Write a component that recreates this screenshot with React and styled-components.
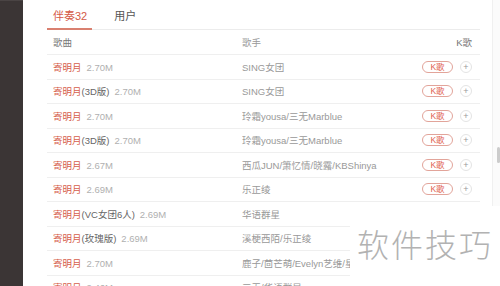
import React from "react";
import styled, { createGlobalStyle } from "styled-components";

const GlobalStyle = createGlobalStyle`
  html, body {
    margin: 0;
    padding: 0;
    background: #fff;
    overflow: hidden;
  }
  body {
    font-family: "Liberation Sans", "Noto Sans CJK SC", sans-serif;
  }
`;

const songs = [
  { name: "寄明月", tag: "", size: "2.70M", singer: "SING女团" },
  { name: "寄明月", tag: "(3D版)", size: "2.70M", singer: "SING女团" },
  { name: "寄明月", tag: "", size: "2.70M", singer: "玲霜yousa/三无Marblue" },
  { name: "寄明月", tag: "(3D版)", size: "2.70M", singer: "玲霜yousa/三无Marblue" },
  { name: "寄明月", tag: "", size: "2.67M", singer: "西瓜JUN/箫忆情/晓露/KBShinya" },
  { name: "寄明月", tag: "", size: "2.69M", singer: "乐正绫" },
  { name: "寄明月", tag: "(VC女团6人)", size: "2.69M", singer: "华语群星" },
  { name: "寄明月", tag: "(玫瑰版)", size: "2.69M", singer: "溪梗西陌/乐正绫" },
  { name: "寄明月", tag: "", size: "2.70M", singer: "鹿子/茴芒萌/Evelyn艺维/星魅" },
  { name: "寄明月", tag: "", size: "2.46M", singer: "三无/华语群星" },
];

function App() {
  return (
    <Page>
      <GlobalStyle />
      <SideStrip />
      <Panel>
        <Content>
          <Tabs>
            <Tab active>伴奏32</Tab>
            <Tab>用户</Tab>
          </Tabs>
          <HeadRow>
            <SongCell>歌曲</SongCell>
            <SingerCell>歌手</SingerCell>
            <HeadAction>K歌</HeadAction>
          </HeadRow>
          {songs.map((s, i) => (
            <Row key={i}>
              <SongCell>
                <SongName>{s.name}</SongName>
                {s.tag && <SongTag>{s.tag}</SongTag>}
                <SongSize>{s.size}</SongSize>
              </SongCell>
              <SingerCell>{s.singer}</SingerCell>
              <Actions>
                <KButton>K歌</KButton>
                <AddButton>+</AddButton>
              </Actions>
            </Row>
          ))}
        </Content>
        <Scrollbar>
          <Thumb />
        </Scrollbar>
      </Panel>
      <Watermark>软件技巧</Watermark>
    </Page>
  );
}

const Page = styled.div`
  position: relative;
  display: flex;
  width: 500px;
  height: 286px;
  overflow: hidden;
`;

const SideStrip = styled.div`
  width: 23px;
  flex-shrink: 0;
  background: #3b3535;
  box-shadow: inset 0 32px 0 -31px #4a4444;
`;

const Panel = styled.div`
  flex: 1;
  display: flex;
  background: #fff;
  padding-left: 24px;
`;

const Content = styled.div`
  width: 433px;
  flex-shrink: 0;
  display: flex;
  flex-direction: column;
`;

const Tabs = styled.div`
  display: flex;
  gap: 16px;
  height: 30px;
  box-sizing: border-box;
  border-bottom: 1px solid #ececec;
`;

const Tab = styled.div`
  display: flex;
  align-items: center;
  height: 30px;
  box-sizing: border-box;
  padding: 1px 5px 0 6px;
  font-size: 11px;
  color: ${(p) => (p.active ? "#d45a47" : "#555")};
  border-bottom: 2px solid ${(p) => (p.active ? "#d98070" : "transparent")};
  margin-bottom: -1px;
`;

const BaseRow = styled.div`
  display: grid;
  grid-template-columns: 195px 1fr 72px;
  align-items: center;
  box-sizing: border-box;
  border-bottom: 1px solid #efefef;
  font-size: 9.5px;
  flex-shrink: 0;
`;

const HeadRow = styled(BaseRow)`
  height: 25px;
  color: #777;
`;

const Row = styled(BaseRow)`
  height: 24.5px;
`;

const SongCell = styled.div`
  padding-left: 6px;
  white-space: nowrap;
  overflow: hidden;
`;

const SongName = styled.span`
  color: #d65d4b;
`;

const SongTag = styled.span`
  color: #666;
`;

const SongSize = styled.span`
  color: #b0b0b0;
  margin-left: 5px;
`;

const SingerCell = styled.div`
  color: #999;
  white-space: nowrap;
  overflow: hidden;
`;

const HeadAction = styled.div`
  text-align: right;
  padding-right: 8px;
`;

const Actions = styled.div`
  display: flex;
  align-items: center;
  justify-content: flex-end;
  gap: 7px;
  padding-right: 8px;
`;

const KButton = styled.div`
  flex-shrink: 0;
  width: 31px;
  height: 12px;
  box-sizing: border-box;
  border: 1px solid #e2a49a;
  border-radius: 7px;
  color: #e0604f;
  font-size: 8.5px;
  line-height: 10px;
  text-align: center;
`;

const AddButton = styled.div`
  flex-shrink: 0;
  width: 12px;
  height: 12px;
  box-sizing: border-box;
  border: 1px solid #e4e4e4;
  border-radius: 50%;
  color: #999;
  font-size: 9px;
  line-height: 10px;
  text-align: center;
`;

const Scrollbar = styled.div`
  position: relative;
  margin-left: 12px;
  width: 8px;
  border-left: 1px solid #f0f0f0;
  background: #fbfbfb;
`;

const Thumb = styled.div`
  position: absolute;
  top: 147px;
  right: 1px;
  width: 3px;
  height: 16px;
  background: #cccccc;
  border-radius: 2px;
`;

const Watermark = styled.div`
  position: absolute;
  left: 350px;
  top: 206px;
  right: 0;
  bottom: 0;
  background: #fff;
  display: flex;
  align-items: center;
  justify-content: center;
  padding-bottom: 6px;
  color: #b2b2b2;
  font-family: "Noto Sans CJK SC", sans-serif;
  font-weight: 300;
  font-size: 32px;
  letter-spacing: 2px;
`;

export default App;
